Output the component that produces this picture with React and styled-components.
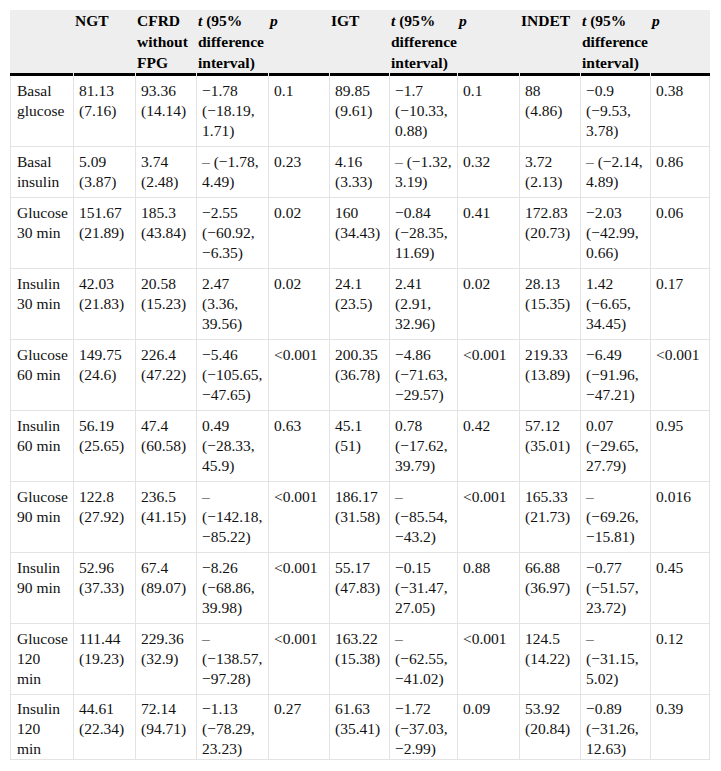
import React from "react";
import styled, { createGlobalStyle } from "styled-components";

const Global = createGlobalStyle`
  html, body { margin: 0; padding: 0; background: #fff; }
  body { font-family: "Liberation Serif", "Times New Roman", serif; }
`;

const Page = styled.div`
  padding: 10px;
`;

const Table = styled.table`
  width: 700px;
  table-layout: fixed;
  border-collapse: separate;
  border-spacing: 0;
  font-family: "Liberation Serif", "Times New Roman", serif;
  font-size: 15.5px;
  color: #111;
`;

const Col = styled.col`
  width: ${(p) => p.$w}px;
`;

const Th = styled.th`
  text-align: left;
  vertical-align: top;
  font-weight: bold;
  line-height: 21px;
  padding: 0 2px 3px 2px;
  white-space: pre;
  color: #000;
  background: linear-gradient(#000, #000) no-repeat right bottom / ${(p) =>
      p.$first ? "100%" : "calc(100% - 1px)"} 3px,
    #eeeeee;
`;

const Line = styled.span`
  display: block;
`;

const Em = styled.i`
  font-style: italic;
`;

const Td = styled.td`
  vertical-align: top;
  line-height: 20px;
  padding: ${(p) => (p.$last ? "4px 3px 0 5px" : "5px 3px 5px 5px")};
  padding-left: ${(p) => (p.$first ? "6px" : "5px")};
  white-space: pre;
  border-left: 1px solid #e3e3e3;
  border-bottom: 1px solid #e3e3e3;
  border-right: ${(p) => (p.$end ? "1px solid #e3e3e3" : "none")};
`;

const widths = [63, 62, 61, 72, 61, 60, 68, 62, 61, 70, 60];

const TInterval = () => (
  <>
    <Line>
      <Em>t</Em>
      <span> (95%</span>
    </Line>
    <Line>difference</Line>
    <Line>interval)</Line>
  </>
);

const header = [
  "",
  "NGT",
  "CFRD\nwithout\nFPG",
  <TInterval key="t1" />,
  <Em key="p1">p</Em>,
  "IGT",
  <TInterval key="t2" />,
  <Em key="p2">p</Em>,
  "INDET",
  <TInterval key="t3" />,
  <Em key="p3">p</Em>,
];

const rows = [
  ["Basal\nglucose", "81.13\n(7.16)", "93.36\n(14.14)", "−1.78\n(−18.19,\n1.71)", "0.1", "89.85\n(9.61)", "−1.7\n(−10.33,\n0.88)", "0.1", "88\n(4.86)", "−0.9\n(−9.53,\n3.78)", "0.38"],
  ["Basal\ninsulin", "5.09\n(3.87)", "3.74\n(2.48)", "– (−1.78,\n4.49)", "0.23", "4.16\n(3.33)", "– (−1.32,\n3.19)", "0.32", "3.72\n(2.13)", "– (−2.14,\n4.89)", "0.86"],
  ["Glucose\n30 min", "151.67\n(21.89)", "185.3\n(43.84)", "−2.55\n(−60.92,\n−6.35)", "0.02", "160\n(34.43)", "−0.84\n(−28.35,\n11.69)", "0.41", "172.83\n(20.73)", "−2.03\n(−42.99,\n0.66)", "0.06"],
  ["Insulin\n30 min", "42.03\n(21.83)", "20.58\n(15.23)", "2.47\n(3.36,\n39.56)", "0.02", "24.1\n(23.5)", "2.41\n(2.91,\n32.96)", "0.02", "28.13\n(15.35)", "1.42\n(−6.65,\n34.45)", "0.17"],
  ["Glucose\n60 min", "149.75\n(24.6)", "226.4\n(47.22)", "−5.46\n(−105.65,\n−47.65)", "<0.001", "200.35\n(36.78)", "−4.86\n(−71.63,\n−29.57)", "<0.001", "219.33\n(13.89)", "−6.49\n(−91.96,\n−47.21)", "<0.001"],
  ["Insulin\n60 min", "56.19\n(25.65)", "47.4\n(60.58)", "0.49\n(−28.33,\n45.9)", "0.63", "45.1\n(51)", "0.78\n(−17.62,\n39.79)", "0.42", "57.12\n(35.01)", "0.07\n(−29.65,\n27.79)", "0.95"],
  ["Glucose\n90 min", "122.8\n(27.92)", "236.5\n(41.15)", "–\n(−142.18,\n−85.22)", "<0.001", "186.17\n(31.58)", "–\n(−85.54,\n−43.2)", "<0.001", "165.33\n(21.73)", "–\n(−69.26,\n−15.81)", "0.016"],
  ["Insulin\n90 min", "52.96\n(37.33)", "67.4\n(89.07)", "−8.26\n(−68.86,\n39.98)", "<0.001", "55.17\n(47.83)", "−0.15\n(−31.47,\n27.05)", "0.88", "66.88\n(36.97)", "−0.77\n(−51.57,\n23.72)", "0.45"],
  ["Glucose\n120\nmin", "111.44\n(19.23)", "229.36\n(32.9)", "–\n(−138.57,\n−97.28)", "<0.001", "163.22\n(15.38)", "–\n(−62.55,\n−41.02)", "<0.001", "124.5\n(14.22)", "–\n(−31.15,\n5.02)", "0.12"],
  ["Insulin\n120\nmin", "44.61\n(22.34)", "72.14\n(94.71)", "−1.13\n(−78.29,\n23.23)", "0.27", "61.63\n(35.41)", "−1.72\n(−37.03,\n−2.99)", "0.09", "53.92\n(20.84)", "−0.89\n(−31.26,\n12.63)", "0.39"],
];

export default function App() {
  return (
    <>
      <Global />
      <Page>
        <Table>
          <colgroup>
            {widths.map((w, i) => (
              <Col key={i} $w={w} />
            ))}
          </colgroup>
          <thead>
            <tr>
              {header.map((h, i) => (
                <Th key={i} $first={i === 0}>
                  {h}
                </Th>
              ))}
            </tr>
          </thead>
          <tbody>
            {rows.map((r, ri) => (
              <tr key={ri}>
                {r.map((c, ci) => (
                  <Td
                    key={ci}
                    $first={ci === 0}
                    $end={ci === r.length - 1}
                    $last={ri === rows.length - 1}
                  >
                    {c}
                  </Td>
                ))}
              </tr>
            ))}
          </tbody>
        </Table>
      </Page>
    </>
  );
}
